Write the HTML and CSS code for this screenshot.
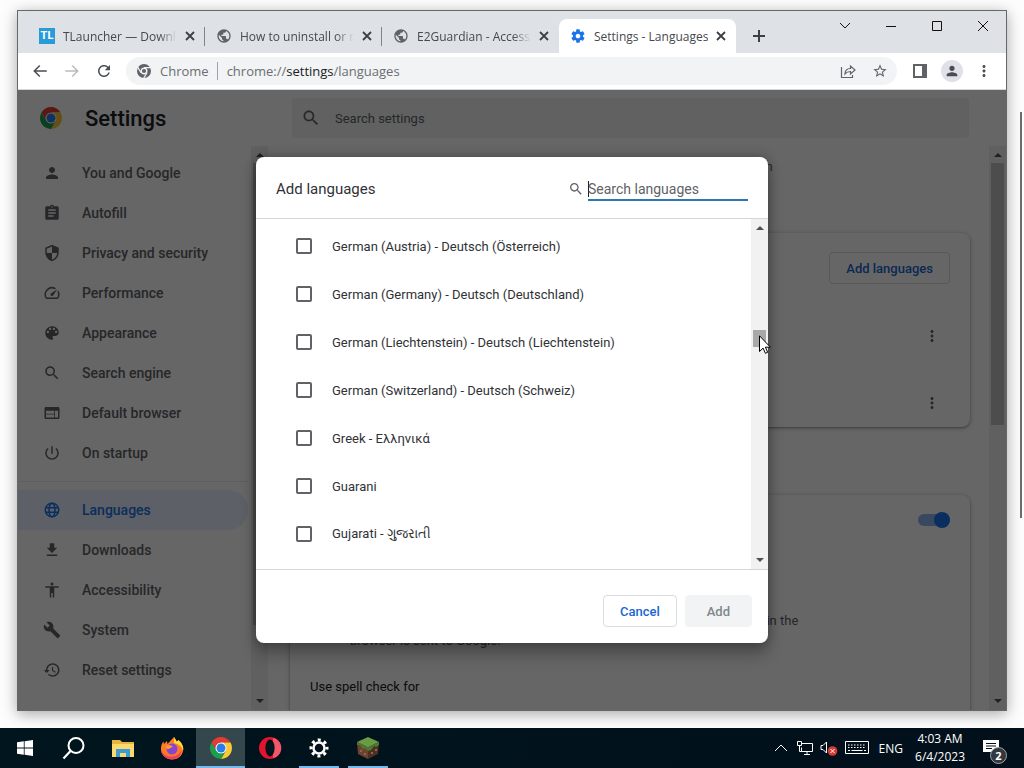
FILE: index.html
```html
<!DOCTYPE html>
<html lang="en">
<head>
    <meta charset="UTF-8" />
    <meta name="viewport" content="width=device-width, initial-scale=1.0"/>
    <title>Settings - Languages</title>
    <link rel="stylesheet" href="styles.css">
</head>
<body>
    <svg class="sprite" aria-hidden="true">
        <symbol id="chrome" viewBox="0 0 48 48">
            <circle cx="24" cy="24" r="12" fill="#fff"/>
            <path fill="#e33b2e" d="M24 13H43.05A22 22 0 0 0 4.95 13L14.47 29.5A11 11 0 0 1 24 13z"/>
            <path fill="#fcc934" transform="rotate(120 24 24)" d="M24 13H43.05A22 22 0 0 0 4.95 13L14.47 29.5A11 11 0 0 1 24 13z"/>
            <path fill="#1e9e4a" transform="rotate(240 24 24)" d="M24 13H43.05A22 22 0 0 0 4.95 13L14.47 29.5A11 11 0 0 1 24 13z"/>
            <circle cx="24" cy="24" r="9" fill="#2a7de9"/>
        </symbol>
        <symbol id="search" viewBox="0 0 24 24"><path d="M15.5 14h-.79l-.28-.27C15.41 12.59 16 11.11 16 9.5 16 5.91 13.09 3 9.5 3S3 5.91 3 9.5 5.91 16 9.5 16c1.61 0 3.09-.59 4.23-1.57l.27.28v.79l5 4.99L20.49 19l-4.99-5zm-6 0C7.01 14 5 11.99 5 9.5S7.01 5 9.5 5 14 7.01 14 9.5 11.99 14 9.5 14z"/></symbol>
        <symbol id="globe" viewBox="0 0 24 24"><path d="M12 2C6.48 2 2 6.48 2 12s4.48 10 10 10 10-4.48 10-10S17.52 2 12 2zm-1 17.93c-3.95-.49-7-3.85-7-7.93 0-.62.08-1.21.21-1.79L9 15v1c0 1.1.9 2 2 2v1.93zm6.9-2.54c-.26-.81-1-1.39-1.9-1.39h-1v-3c0-.55-.45-1-1-1H8v-2h2c.55 0 1-.45 1-1V7h2c1.1 0 2-.9 2-2v-.41c2.93 1.19 5 4.06 5 7.41 0 2.08-.8 3.97-2.1 5.39z"/></symbol>
        <symbol id="person" viewBox="0 0 24 24"><path d="M12 12c2.21 0 4-1.79 4-4s-1.79-4-4-4-4 1.79-4 4 1.79 4 4 4zm0 2c-2.67 0-8 1.34-8 4v2h16v-2c0-2.66-5.33-4-8-4z"/></symbol>
        <symbol id="more" viewBox="0 0 24 24"><path d="M12 8c1.1 0 2-.9 2-2s-.9-2-2-2-2 .9-2 2 .9 2 2 2zm0 2c-1.1 0-2 .9-2 2s.9 2 2 2 2-.9 2-2-.9-2-2-2zm0 6c-1.1 0-2 .9-2 2s.9 2 2 2 2-.9 2-2-.9-2-2-2z"/></symbol>
        <symbol id="close" viewBox="0 0 10 10"><path d="M1 1l8 8M9 1l-8 8" fill="none" stroke="#3c4043" stroke-width="1.8"/></symbol>
        <symbol id="gear" viewBox="0 0 24 24"><path d="M19.43 12.98c.04-.32.07-.64.07-.98s-.03-.66-.07-.98l2.11-1.65c.19-.15.24-.42.12-.64l-2-3.46c-.12-.22-.39-.3-.61-.22l-2.49 1c-.52-.4-1.08-.73-1.69-.98l-.38-2.65C14.46 2.18 14.25 2 14 2h-4c-.25 0-.46.18-.49.42l-.38 2.65c-.61.25-1.17.59-1.69.98l-2.49-1c-.23-.09-.49 0-.61.22l-2 3.46c-.13.22-.07.49.12.64l2.11 1.65c-.04.32-.07.65-.07.98s.03.66.07.98l-2.11 1.65c-.19.15-.24.42-.12.64l2 3.46c.12.22.39.3.61.22l2.49-1c.52.4 1.08.73 1.69.98l.38 2.65c.03.24.24.42.49.42h4c.25 0 .46-.18.49-.42l.38-2.65c.61-.25 1.17-.59 1.69-.98l2.49 1c.23.09.49 0 .61-.22l2-3.46c.12-.22.07-.49-.12-.64l-2.11-1.65zM12 15.5c-1.93 0-3.5-1.57-3.5-3.5s1.57-3.5 3.5-3.5 3.5 1.57 3.5 3.5-1.57 3.5-3.5 3.5z"/></symbol>
        <symbol id="up" viewBox="0 0 8 4"><path d="M0 4l4-4 4 4z"/></symbol>
        <symbol id="down" viewBox="0 0 8 4"><path d="M0 0l4 4 4-4z"/></symbol>
    </svg>

    <div class="desktop">
        <div class="window">
            <div class="tab-strip">
                <div class="tab">
                    <span class="favicon tl">TL</span>
                    <span class="tab-title">TLauncher — Download</span>
                    <button class="tab-close" aria-label="Close tab"><svg><use href="#close"/></svg></button>
                </div>
                <div class="tab">
                    <svg class="favicon"><use href="#globe"/></svg>
                    <span class="tab-title">How to uninstall or remove</span>
                    <button class="tab-close" aria-label="Close tab"><svg><use href="#close"/></svg></button>
                </div>
                <div class="tab">
                    <svg class="favicon"><use href="#globe"/></svg>
                    <span class="tab-title">E2Guardian - Access Denied</span>
                    <button class="tab-close" aria-label="Close tab"><svg><use href="#close"/></svg></button>
                </div>
                <div class="tab active">
                    <svg class="favicon"><use href="#gear"/></svg>
                    <span class="tab-title">Settings - Languages</span>
                    <button class="tab-close" aria-label="Close tab"><svg><use href="#close"/></svg></button>
                </div>
                <button class="new-tab" aria-label="New tab"><svg viewBox="0 0 12 12"><path d="M6 0v12M0 6h12" stroke="#3c4043" stroke-width="2"/></svg></button>
                <div class="window-buttons">
                    <button aria-label="Search tabs"><svg viewBox="0 0 12 12"><path d="M1 3l5 5 5-5"/></svg></button>
                    <button aria-label="Minimize"><svg viewBox="0 0 12 12"><path d="M1 6.5h10"/></svg></button>
                    <button aria-label="Maximize"><svg viewBox="0 0 12 12"><path d="M1.5 1.5h9v9h-9z"/></svg></button>
                    <button aria-label="Close"><svg viewBox="0 0 12 12"><path d="M1 1l10 10M11 1L1 11"/></svg></button>
                </div>
            </div>

            <div class="toolbar">
                <button class="tool" aria-label="Back"><svg viewBox="0 0 24 24"><path d="M21 11H6.83l5.59-5.59L11 4l-8 8 8 8 1.41-1.41L6.83 13H21v-2z"/></svg></button>
                <button class="tool" aria-label="Forward" disabled><svg viewBox="0 0 24 24"><path d="M3 11h14.17l-5.59-5.59L13 4l8 8-8 8-1.41-1.41L17.17 13H3v-2z"/></svg></button>
                <button class="tool" aria-label="Reload"><svg viewBox="0 0 24 24"><path d="M17.65 6.35C16.2 4.9 14.21 4 12 4c-4.42 0-7.99 3.58-7.99 8s3.57 8 7.99 8c3.73 0 6.84-2.55 7.73-6h-2.08c-.82 2.33-3.04 4-5.65 4-3.31 0-6-2.69-6-6s2.69-6 6-6c1.66 0 3.14.69 4.22 1.78L13 11h7V4l-2.35 2.35z"/></svg></button>
                <div class="omnibox">
                    <svg class="site-icon" viewBox="0 0 16 16"><circle cx="8" cy="8" r="7" fill="#5f6368"/><circle cx="8" cy="8" r="2.8" fill="#5f6368" stroke="#f1f3f4" stroke-width="1.4"/><path d="M8 4.6h7M5 9.7L1.6 3.9M11 9.7L7.5 15.5" stroke="#f1f3f4" stroke-width="1.2"/></svg>
                    <span class="site-name">Chrome</span>
                    <span class="url">chrome://<b>settings</b>/languages</span>
                    <button class="box-icon" aria-label="Share"><svg viewBox="0 0 16 16"><path d="M1.5 4v10.500h11V12M5 11c0-4 2-5.500 5.500-5.500V3L15 7l-4.500 4V8.500C8 8.500 6.500 9 5 11z" fill="none" stroke="#5f6368" stroke-width="1.200"/></svg></button>
                    <button class="box-icon" aria-label="Bookmark this tab"><svg viewBox="0 0 24 24"><path fill="#5f6368" d="M22 9.24l-7.19-.62L12 2 9.19 8.63 2 9.24l5.46 4.73L5.82 21 12 17.27 18.18 21l-1.63-7.03L22 9.24zM12 15.4l-3.76 2.27 1-4.28-3.32-2.88 4.38-.38L12 6.1l1.71 4.04 4.38.38-3.32 2.88 1 4.28L12 15.4z"/></svg></button>
                </div>
                <button class="tool" aria-label="Side panel"><svg viewBox="0 0 18 18"><path d="M3 3h12v12H3z" fill="none" stroke="#5f6368" stroke-width="2"/><path d="M11 3h5v12h-5z" fill="#5f6368"/></svg></button>
                <button class="tool" aria-label="Profile"><span class="avatar"><svg><use href="#person"/></svg></span></button>
                <button class="tool" aria-label="Menu"><svg><use href="#more"/></svg></button>
            </div>

            <div class="page">
                <header class="page-header">
                    <svg class="logo"><use href="#chrome"/></svg>
                    <h1>Settings</h1>
                    <label class="settings-search">
                        <svg><use href="#search"/></svg>
                        <input type="text" placeholder="Search settings" aria-label="Search settings" />
                    </label>
                </header>

                <div class="page-body">
                    <nav class="sidebar">
                        <a href="#people"><svg><use href="#person"/></svg>You and Google</a>
                        <a href="#autofill"><svg viewBox="0 0 24 24"><path d="M19 3h-4.180C14.400 1.840 13.300 1 12 1c-1.300 0-2.400.84-2.820 2H5c-1.100 0-2 .9-2 2v14c0 1.100.9 2 2 2h14c1.100 0 2-.9 2-2V5c0-1.100-.9-2-2-2zm-7 0c.55 0 1 .45 1 1s-.45 1-1 1-1-.45-1-1 .45-1 1-1zm2 14H7v-2h7v2zm3-4H7v-2h10v2zm0-4H7V7h10v2z"/></svg>Autofill</a>
                        <a href="#privacy"><svg viewBox="0 0 24 24"><path d="M12 1L3 5v6c0 5.550 3.840 10.740 9 12 5.160-1.260 9-6.450 9-12V5l-9-4zm0 10.990h7c-.53 4.120-3.280 7.790-7 8.940V12H5V6.300l7-3.110v8.800z"/></svg>Privacy and security</a>
                        <a href="#performance"><svg viewBox="0 0 24 24"><path d="M20.380 8.570l-1.230 1.850a8 8 0 0 1-.22 7.580H5.070A8 8 0 0 1 15.580 6.850l1.850-1.230A10 10 0 0 0 3.350 19a2 2 0 0 0 1.720 1h13.850a2 2 0 0 0 1.740-1 10 10 0 0 0-.27-10.440zm-9.790 6.840a2 2 0 0 0 2.830 0l5.660-8.490-8.490 5.660a2 2 0 0 0 0 2.830z"/></svg>Performance</a>
                        <a href="#appearance"><svg viewBox="0 0 24 24"><path d="M12 3c-4.970 0-9 4.030-9 9s4.030 9 9 9c.83 0 1.500-.67 1.500-1.500 0-.39-.15-.74-.39-1.010-.23-.26-.38-.61-.38-.99 0-.83.67-1.500 1.500-1.500H16c2.760 0 5-2.240 5-5 0-4.420-4.030-8-9-8zm-5.500 9c-.83 0-1.500-.67-1.500-1.500S5.670 9 6.500 9 8 9.670 8 10.500 7.330 12 6.500 12zm3-4C8.670 8 8 7.330 8 6.500S8.670 5 9.500 5s1.500.67 1.500 1.500S10.330 8 9.500 8zm5 0c-.83 0-1.500-.67-1.500-1.500S13.670 5 14.500 5s1.500.67 1.500 1.500S15.330 8 14.500 8zm3 4c-.83 0-1.500-.67-1.500-1.500S16.670 9 17.500 9s1.500.67 1.500 1.500-.67 1.500-1.500 1.500z"/></svg>Appearance</a>
                        <a href="#search-engine"><svg><use href="#search"/></svg>Search engine</a>
                        <a href="#default-browser"><svg viewBox="0 0 24 24"><path d="M20 4H4c-1.100 0-1.990.9-1.990 2L2 18c0 1.100.9 2 2 2h16c1.100 0 2-.9 2-2V6c0-1.100-.9-2-2-2zm-5 14H4v-4h11v4zm0-5H4V9h11v4zm5 5h-4V9h4v9z"/></svg>Default browser</a>
                        <a href="#startup"><svg viewBox="0 0 24 24"><path d="M13 3h-2v10h2V3zm4.830 2.170l-1.420 1.420C17.990 7.860 19 9.810 19 12c0 3.870-3.130 7-7 7s-7-3.130-7-7c0-2.190 1.010-4.140 2.580-5.420L6.170 5.170C4.230 6.820 3 9.260 3 12c0 4.970 4.030 9 9 9s9-4.030 9-9c0-2.740-1.230-5.180-3.170-6.830z"/></svg>On startup</a>
                        <hr>
                        <a href="#languages" class="selected"><svg viewBox="0 0 24 24"><g fill="none" stroke="currentColor" stroke-width="2"><circle cx="12" cy="12" r="9"/><ellipse cx="12" cy="12" rx="4" ry="9"/><path d="M4 9h16M4 15h16"/></g></svg>Languages</a>
                        <a href="#downloads"><svg viewBox="0 0 24 24"><path d="M19 9h-4V3H9v6H5l7 7 7-7zM5 18v2h14v-2H5z"/></svg>Downloads</a>
                        <a href="#accessibility"><svg viewBox="0 0 24 24"><path d="M12 2c1.100 0 2 .9 2 2s-.9 2-2 2-2-.9-2-2 .9-2 2-2zm9 7h-6v13h-2v-6h-2v6H9V9H3V7h18v2z"/></svg>Accessibility</a>
                        <a href="#system"><svg viewBox="0 0 24 24"><path d="M22.700 19l-9.100-9.100c.9-2.300.4-5-1.500-6.900-2-2-5-2.400-7.400-1.300L9 6 6 9 1.600 4.700C.4 7.100.9 10.100 2.900 12.100c1.900 1.900 4.600 2.400 6.900 1.500l9.100 9.100c.4.4 1 .4 1.400 0l2.300-2.300c.5-.4.5-1.100.1-1.400z"/></svg>System</a>
                        <a href="#reset"><svg viewBox="0 0 24 24"><path d="M13 3c-4.970 0-9 4.030-9 9H1l3.890 3.890.07.14L9 12H6c0-3.870 3.130-7 7-7s7 3.130 7 7-3.130 7-7 7c-1.930 0-3.680-.79-4.940-2.060l-1.420 1.420C8.270 19.990 10.510 21 13 21c4.970 0 9-4.030 9-9s-4.030-9-9-9zm-1 5v5l4.280 2.540.72-1.210-3.500-2.080V8H12z"/></svg>Reset settings</a>
                    </nav>
                    <div class="scrollbar sidebar-scroll">
                        <svg><use href="#up"/></svg>
                        <div class="track"><div class="thumb"></div></div>
                        <svg><use href="#down"/></svg>
                    </div>

                    <main class="content">
                        <p class="intro">Tell websites the languages you read, so that they can display content in your region</p>
                        <h2>Preferred languages</h2>
                        <section class="card">
                            <div class="card-head">
                                <span>Add or rank preferred languages</span>
                                <button class="btn">Add languages</button>
                            </div>
                            <div class="lang-row"><span>1. English (United States)</span><button aria-label="More actions"><svg><use href="#more"/></svg></button></div>
                            <div class="lang-row"><span>2. English</span><button aria-label="More actions"><svg><use href="#more"/></svg></button></div>
                        </section>
                        <h2>Spell check</h2>
                        <section class="card">
                            <label class="toggle-row">Check for spelling errors when you type text on web pages<input type="checkbox" role="switch" class="toggle" checked /></label>
                            <label class="radio-row"><input type="radio" name="spell" checked /><span>Basic spell check</span></label>
                            <label class="radio-row"><input type="radio" name="spell" /><span>Enhanced spell check<br><small>Uses the same spell checker that's used in Google search. Text you type in the browser is sent to Google.</small></span></label>
                            <p class="spell-for">Use spell check for</p>
                        </section>
                    </main>
                    <div class="scrollbar page-scroll">
                        <svg><use href="#up"/></svg>
                        <div class="track"><div class="thumb"></div></div>
                        <svg><use href="#down"/></svg>
                    </div>
                </div>

                <div class="overlay">
                    <div class="dialog" role="dialog" aria-labelledby="dialog-title">
                        <div class="dialog-head">
                            <h2 id="dialog-title">Add languages</h2>
                            <label class="lang-search">
                                <svg><use href="#search"/></svg>
                                <input type="text" placeholder="Search languages" aria-label="Search languages" />
                            </label>
                        </div>
                        <div class="dialog-body">
                            <div class="lang-list">
                                <label><input type="checkbox" />German (Austria) - Deutsch (Österreich)</label>
                                <label><input type="checkbox" />German (Germany) - Deutsch (Deutschland)</label>
                                <label><input type="checkbox" />German (Liechtenstein) - Deutsch (Liechtenstein)</label>
                                <label><input type="checkbox" />German (Switzerland) - Deutsch (Schweiz)</label>
                                <label><input type="checkbox" />Greek - Ελληνικά</label>
                                <label><input type="checkbox" />Guarani</label>
                                <label><input type="checkbox" />Gujarati - ગુજરાતી</label>
                            </div>
                            <div class="scrollbar list-scroll">
                                <svg><use href="#up"/></svg>
                                <div class="track">
                                    <div class="thumb">
                                        <svg class="cursor" viewBox="0 0 12 19"><path d="M.5.8v15.700l3.600-3.400 2.300 5.200 2.300-1-2.300-5.100h5z" fill="#fff" stroke="#000"/></svg>
                                    </div>
                                </div>
                                <svg><use href="#down"/></svg>
                            </div>
                        </div>
                        <div class="dialog-foot">
                            <button class="btn">Cancel</button>
                            <button class="btn" disabled>Add</button>
                        </div>
                    </div>
                </div>
            </div>
        </div>
        <div class="edge-scroll"></div>
    </div>

    <footer class="taskbar">
        <button class="app" aria-label="Start"><svg viewBox="0 0 24 24" fill="#fff"><path d="M4 6.300l6.800-1v6.200H4zM11.600 5.200L20 4v7.500h-8.400zM4 12.400h6.800v6.300l-6.800-1zM11.600 12.400H20V20l-8.400-1.200z"/></svg></button>
        <button class="app" aria-label="Search"><svg viewBox="0 0 24 24"><circle cx="14" cy="9.500" r="7.500" fill="none" stroke="#fff" stroke-width="2"/><path d="M8.500 15L1.500 22.500" stroke="#fff" stroke-width="2.200"/></svg></button>
        <button class="app" aria-label="File Explorer"><svg viewBox="0 0 24 24"><path d="M1 4h8l2 2h12v15H1z" fill="#e9b33c"/><path d="M1 8h22v13H1z" fill="#fbd96c"/><path d="M5 13h14v8h-4v-4H9v4H5z" fill="#3d9bd3"/><path d="M9 17h6v4H9z" fill="#fbd96c"/></svg></button>
        <button class="app" aria-label="Firefox"><svg viewBox="0 0 24 24"><path d="M14 1c1 2 2 2.500 2.500 4.500C18 5 18.500 4 18.500 4 22 7 24 11 23 15c-1 5-5.500 8.500-11 8.500S1.500 19.500 1 14C.7 10 2 7 3.500 5.500L4 8l3-3 .5 3z" fill="#ff7a25"/><path d="M14 1c1 2 2 2.500 2.500 4.500C18 5 18.500 4 18.500 4 22 7 24 11 23 15c-1-5-5-7-9-8z" fill="#ffd83c"/><path d="M1 14c2 5 7 7 11 6.500 5-.5 8-3 9.500-6C21 20 17 23.500 12 23.500S1.500 19.500 1 14z" fill="#f03e60"/><circle cx="12" cy="13" r="5.500" fill="#8a45cf"/><path d="M6 10c3-2 5-.5 7 1-2 0-3 2-6 2z" fill="#ffa32b"/></svg></button>
        <button class="app current" aria-label="Google Chrome"><svg><use href="#chrome"/></svg></button>
        <button class="app" aria-label="Opera"><svg viewBox="0 0 24 24"><circle cx="12" cy="12" r="11" fill="#e3142d"/><path d="M15 2c11 2 11 18 0 20z" fill="#f0586a"/><ellipse cx="12" cy="12" rx="4.600" ry="8.500" fill="#02131c"/></svg></button>
        <button class="app open" aria-label="Settings"><svg viewBox="0 0 24 24"><g fill="none" stroke="#fff"><circle cx="12" cy="12" r="5.500" stroke-width="2.500"/><circle cx="12" cy="12" r="8" stroke-width="3" stroke-dasharray="3 3.283" stroke-dashoffset="1.500"/></g></svg></button>
        <button class="app open" aria-label="Minecraft"><svg viewBox="0 0 24 24"><path d="M12 1l11 5-11 5.500L1 6z" fill="#6b9a45"/><path d="M1 6l11 5.500V23L2 18z" fill="#6a4430"/><path d="M23 6l-11 5.500V23l10-5z" fill="#4b3023"/><path d="M1 6l11 5.500L23 6v3l-3 2-2-1-3 4-3 1-3-3-2 1-3-4-3 0z" fill="#4d7a33"/><path d="M4 14h2v2H4zM8 17h2v2H8zM15 16h2v2h-2zM19 13h2v2h-2z" fill="#9a6242"/></svg></button>

        <div class="tray">
            <svg class="tray-up" viewBox="0 0 12 12"><path d="M0 9l6-6 6 6"/></svg>
            <svg class="tray-net" viewBox="0 0 16 16"><path d="M5 3.500h10.500v8H4.500v-4M10 11.500v3M7 14.500h6M.5 1.500h4v4h-4zM2.500 5.500v6h2"/></svg>
            <svg class="tray-vol" viewBox="0 0 18 16"><path d="M1 5.500h2L6.500 2v11L3 9.500H1z"/><circle cx="12.500" cy="11" r="4.800" fill="#d83a34" stroke="none"/><path d="M10.500 9l4 4M14.500 9l-4 4"/></svg>
            <svg class="tray-kbd" viewBox="0 0 24 14"><path d="M.5.5h23v12H.5z"/><path d="M3 4h18M3 6.500h18" stroke-dasharray="1.500 1.500"/><path d="M3 9.500h2M6.500 9.500h11M19 9.500h2"/></svg>
            <span class="lang">ENG</span>
            <time class="clock">4:03 AM<br>6/4/2023</time>
            <span class="notify">
                <svg viewBox="0 0 16 16"><path d="M0 0h16v12h-4v4l-4-4H0z" fill="#fff" stroke="none"/><path d="M3 3.500h10M3 6h10M3 8.500h6" stroke="#02101c"/></svg>
                <span class="count">2</span>
            </span>
        </div>
    </footer>
</body>
</html>
```
FILE: styles.css
```css
* {
    box-sizing: border-box;
}

body {
    margin: 0;
    height: 100vh;
    display: flex;
    flex-direction: column;
    font-family: Roboto, "Noto Sans", sans-serif;
    font-size: 13px;
    color: #202124;
    background: #fdfdfd;
    overflow: hidden;
}

button {
    padding: 0;
    border: none;
    background: none;
    font-family: inherit;
    display: flex;
    align-items: center;
    justify-content: center;
}

input {
    font-family: inherit;
    margin: 0;
}

svg {
    display: block;
    flex-shrink: 0;
}

.sprite {
    position: absolute;
    width: 0;
    height: 0;
}

/* Desktop and window */
.desktop {
    flex: 1;
    min-height: 0;
    display: flex;
    padding: 10px 17px 17px;
    position: relative;
}

.window {
    flex: 1;
    min-width: 0;
    display: flex;
    flex-direction: column;
    border: 1px solid #66686a;
    box-shadow: 0 3px 14px rgba(0,0,0,0.35);
}

.edge-scroll {
    position: absolute;
    right: 2px;
    top: 112px;
    width: 2px;
    height: 406px;
    background: #6b6b6b;
}

.tab-strip {
    height: 42px;
    display: flex;
    align-items: flex-end;
    padding-left: 10px;
    background: #dee1e6;
    font-family: "Open Sans", sans-serif;
    font-size: 12px;
    color: #45494d;
}

.tab {
    width: 177px;
    height: 34px;
    display: flex;
    align-items: center;
    gap: 8px;
    padding: 0 10px 0 11px;
    position: relative;
}

.tab:not(.active)::after {
    content: "";
    position: absolute;
    right: 0;
    top: 8px;
    width: 1px;
    height: 19px;
    background: #808387;
}

.tab:nth-child(3)::after {
    display: none;
}

.tab.active {
    background: #fff;
    border-radius: 8px 8px 0 0;
}

.favicon {
    width: 16px;
    height: 16px;
    flex-shrink: 0;
    fill: #5f6368;
}

.tl {
    background: #2a9bd8;
    color: #fff;
    font-family: Roboto, sans-serif;
    font-size: 11px;
    font-weight: bold;
    line-height: 16px;
    text-align: center;
}

.active .favicon {
    fill: #1a73e8;
}

.tab-title {
    flex: 1;
    overflow: hidden;
    white-space: nowrap;
    -webkit-mask-image: linear-gradient(to right, #000 84%, transparent);
    mask-image: linear-gradient(to right, #000 84%, transparent);
}

.active .tab-title {
    -webkit-mask-image: none;
    mask-image: none;
}

.tab-close svg {
    width: 10px;
    height: 10px;
}

.new-tab {
    width: 46px;
    height: 34px;
}

.new-tab svg {
    width: 12px;
    height: 12px;
}

.window-buttons {
    margin-left: auto;
    align-self: flex-start;
    display: flex;
}

.window-buttons button {
    width: 46px;
    height: 29px;
}

.window-buttons svg {
    width: 12px;
    height: 12px;
    fill: none;
    stroke: #111;
}

.toolbar {
    height: 37px;
    display: flex;
    align-items: center;
    padding: 0 6px;
    background: #fff;
    border-bottom: 1px solid #d5d7da;
}

.tool {
    width: 32px;
    height: 32px;
}

.tool svg {
    width: 18px;
    height: 18px;
    fill: #4a4d51;
}

.tool:disabled svg {
    fill: #babcbe;
}

.avatar {
    width: 22px;
    height: 22px;
    display: flex;
    align-items: center;
    justify-content: center;
    border-radius: 50%;
    background: #dfe0e8;
}

.avatar svg {
    width: 16px;
    height: 16px;
}

.omnibox {
    flex: 1;
    height: 28px;
    display: flex;
    align-items: center;
    margin: 0 7px 0 6px;
    padding: 0 1px 0 10px;
    border-radius: 14px;
    background: #f1f3f4;
    font-family: "Open Sans", sans-serif;
    font-size: 13px;
    color: #6a6e73;
}

.site-icon {
    width: 16px;
    height: 16px;
}

.site-name {
    margin-left: 8px;
    padding-right: 8px;
    border-right: 1px solid #a0a3a7;
}

.url {
    flex: 1;
    margin-left: 9px;
}

.url b {
    font-weight: normal;
    color: #202124;
}

.box-icon {
    width: 32px;
    height: 28px;
}

.box-icon svg {
    width: 16px;
    height: 16px;
}

/* Settings page */
.page {
    flex: 1;
    min-height: 0;
    display: flex;
    flex-direction: column;
    position: relative;
    background: #fff;
    overflow: hidden;
}

.page-header {
    height: 56px;
    flex-shrink: 0;
    display: flex;
    align-items: center;
    padding: 0 37px 0 21px;
}

.logo {
    width: 24px;
    height: 24px;
}

h1 {
    width: 207px;
    margin: 0 0 0 22px;
    font-size: 22px;
    font-weight: 500;
}

.settings-search {
    flex: 1;
    height: 40px;
    display: flex;
    align-items: center;
    gap: 14px;
    padding: 0 9px;
    border-radius: 4px;
    background: #f0f3f1;
}

.settings-search svg {
    width: 20px;
    height: 20px;
    fill: #5f6368;
}

.settings-search input {
    flex: 1;
    padding: 0;
    border: none;
    background: none;
    font-size: 13px;
}

.settings-search input::placeholder {
    color: #5f6368;
}

.page-body {
    flex: 1;
    min-height: 0;
    display: flex;
}

.sidebar {
    width: 233px;
    padding: 7px 3px 0 0;
}

.sidebar a {
    height: 40px;
    display: flex;
    align-items: center;
    gap: 21px;
    padding-left: 25px;
    border-radius: 0 20px 20px 0;
    color: #5f6368;
    font-size: 14px;
    font-weight: 500;
    text-decoration: none;
}

.sidebar svg {
    width: 18px;
    height: 18px;
    fill: currentColor;
}

.sidebar a.selected {
    color: #1a73e8;
    background: #e8f0fe;
}

.sidebar hr {
    margin: 8px 0;
    border: none;
    border-top: 1px solid #e8eaed;
}

.scrollbar {
    width: 17px;
    display: flex;
    flex-direction: column;
    align-items: center;
    padding: 7px 0;
    background: #f1f1f1;
}

.scrollbar > svg {
    width: 8px;
    height: 4px;
    fill: #505050;
}

.track {
    flex: 1;
    width: 13px;
    padding: 6px 0;
}

.thumb {
    background: #c1c1c1;
}

.sidebar-scroll .thumb {
    height: 462px;
}

.page-scroll .thumb {
    height: 262px;
}

.content {
    flex: 1;
    min-width: 0;
    padding: 0 19px 0 22px;
    overflow: hidden;
}

.intro {
    margin: 11px 0 0;
    line-height: 20px;
    color: #5f6368;
}

.content h2 {
    margin: 24px 0 12px;
    font-size: 14px;
    line-height: 20px;
    font-weight: 500;
}

.card {
    padding: 0 20px;
    border-radius: 8px;
    box-shadow: 0 1px 2px rgba(60,64,67,0.4), 0 1px 4px 1px rgba(60,64,67,0.2);
}

.card-head {
    display: flex;
    align-items: center;
    justify-content: space-between;
    padding: 19px 0 28px;
}

.btn {
    height: 32px;
    padding: 0 16px;
    border: 1px solid #dadce0;
    border-radius: 4px;
    font-size: 13px;
    font-weight: 500;
    color: #1967d2;
}

.btn:disabled {
    padding: 0 21px;
    border-color: #f1f3f4;
    background: #f1f3f4;
    color: #80868b;
}

.lang-row {
    height: 48px;
    display: flex;
    align-items: center;
    justify-content: space-between;
    padding-right: 9px;
}

.lang-row + .lang-row {
    margin-top: 19px;
}

.lang-row svg {
    width: 18px;
    height: 18px;
    fill: #5f6368;
}

.content .card + h2 {
    margin-top: 36px;
}

.toggle-row {
    height: 50px;
    display: flex;
    align-items: center;
    justify-content: space-between;
}

.toggle {
    appearance: none;
    width: 32px;
    height: 12px;
    border-radius: 6px;
    background: #8cb4f0;
    display: flex;
    align-items: center;
    justify-content: flex-end;
}

.toggle::before {
    content: "";
    width: 16px;
    height: 16px;
    border-radius: 50%;
    background: #1a73e8;
}

.radio-row {
    max-width: 520px;
    display: flex;
    align-items: flex-start;
    gap: 24px;
    padding: 10px 0 6px;
    line-height: 20px;
}

.radio-row input {
    width: 16px;
    height: 16px;
    flex-shrink: 0;
}

.radio-row small {
    font-size: 13px;
    color: #5f6368;
}

.spell-for {
    margin: 20px 0 0;
    padding-bottom: 48px;
    line-height: 20px;
}

/* Add languages dialog */
.overlay {
    position: absolute;
    inset: 0;
    display: flex;
    justify-content: center;
    padding: 67px 24px;
    background: rgba(0,0,0,0.6);
}

.dialog {
    width: 512px;
    display: flex;
    flex-direction: column;
    border-radius: 8px;
    background: #fff;
    color: #303236;
    box-shadow: 0 0 12px rgba(0,0,0,0.3), 0 12px 16px rgba(0,0,0,0.24);
}

.dialog-head {
    height: 62px;
    display: flex;
    align-items: center;
    justify-content: space-between;
    padding: 2px 20px 0;
    border-bottom: 1px solid #d4d6d9;
}

.dialog h2 {
    margin: 0;
    font-size: 15px;
    font-weight: normal;
}

.lang-search {
    display: flex;
    align-items: center;
    gap: 4px;
}

.lang-search svg {
    width: 16px;
    height: 16px;
    fill: #5f6368;
}

.lang-search input {
    width: 160px;
    height: 24px;
    padding: 2px 0 0;
    border: none;
    border-bottom: 2px solid #2f77b3;
    font-size: 14px;
    background: linear-gradient(#202124, #202124) 0 4px / 1px 16px no-repeat;
}

.lang-search input::placeholder {
    color: #5f6368;
}

.dialog-body {
    flex: 1;
    min-height: 0;
    display: flex;
}

.lang-list {
    flex: 1;
    padding: 3px 40px 0;
    overflow: hidden;
}

.lang-list label {
    height: 48px;
    display: flex;
    align-items: center;
    gap: 20px;
}

.lang-list input {
    appearance: none;
    width: 16px;
    height: 16px;
    border: 2px solid #5f6368;
    border-radius: 2px;
}

.list-scroll .track {
    padding-top: 100px;
}

.list-scroll .thumb {
    height: 17px;
    background: #a8a8a8;
    position: relative;
}

.cursor {
    position: absolute;
    left: 6px;
    top: 5px;
    width: 12px;
    height: 19px;
}

.dialog-foot {
    display: flex;
    justify-content: flex-end;
    gap: 8px;
    padding: 25px 16px 16px;
    border-top: 1px solid #d4d6d9;
}

/* Taskbar */
.taskbar {
    height: 40px;
    display: flex;
    background: linear-gradient(to right, #00151e, #02101b);
    font-family: "Open Sans", sans-serif;
    font-size: 12px;
    color: #fff;
}

.app {
    width: 49px;
}

.app svg {
    width: 24px;
    height: 24px;
}

.app.current {
    background: #33474d;
    border-bottom: 2px solid #76b9ed;
    border-top: 2px solid transparent;
}

.app.open {
    background: linear-gradient(#76b9ed, #76b9ed) center bottom / 40px 2px no-repeat;
}

.tray {
    margin-left: auto;
    display: flex;
    align-items: center;
    padding-right: 25px;
}

.tray svg {
    fill: none;
    stroke: #fff;
}

.tray-up {
    width: 12px;
    height: 12px;
}

.tray-net {
    width: 16px;
    height: 16px;
    margin-left: 10px;
}

.tray-vol {
    width: 18px;
    height: 16px;
    margin-left: 7px;
}

.tray-kbd {
    width: 24px;
    height: 14px;
    margin-left: 7px;
}

.lang {
    margin-left: 10px;
}

.clock {
    margin-left: 12px;
    line-height: 18px;
    text-align: center;
}

.notify {
    position: relative;
    margin-left: 18px;
}

.notify svg {
    width: 16px;
    height: 16px;
}

.count {
    position: absolute;
    left: 7px;
    top: 7px;
    width: 17px;
    height: 17px;
    border: 1px solid #a0a4a8;
    border-radius: 50%;
    background: #33383e;
    font-size: 11px;
    font-weight: bold;
    line-height: 15px;
    text-align: center;
}
```
